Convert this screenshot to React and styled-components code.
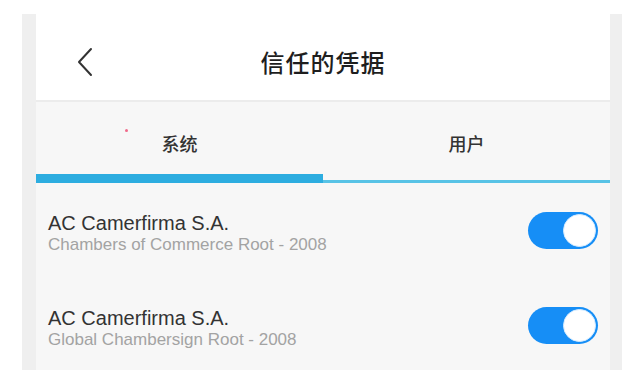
import React from "react";
import styled, { createGlobalStyle } from "styled-components";

const GlobalStyle = createGlobalStyle`
  html, body { margin: 0; padding: 0; background: #ffffff; }
  body { font-family: "Liberation Sans", "Noto Sans CJK SC", sans-serif; }
`;

const Frame = styled.div`
  margin: 14px 12px 0 22px;
  width: 574px;
  height: 356px;
  padding: 0 12px 0 14px;
  background: #efefef;
`;

const Screen = styled.div`
  height: 100%;
  background: #f7f7f7;
  display: flex;
  flex-direction: column;
  overflow: hidden;
`;

const Header = styled.header`
  height: 88px;
  flex: none;
  box-sizing: border-box;
  padding-top: 9px;
  background: #ffffff;
  border-bottom: 2px solid #ececec;
  display: grid;
  grid-template-columns: 1fr auto 1fr;
  align-items: center;
`;

const BackButton = styled.button`
  justify-self: start;
  margin-left: 40px;
  padding: 0;
  border: 0;
  background: none;
  display: flex;
`;

const Title = styled.h1`
  margin: 0;
  font-family: "Noto Sans CJK SC", sans-serif;
  font-size: 24px;
  font-weight: 500;
  color: #1e1e1e;
  letter-spacing: 1px;
`;

const Tabs = styled.nav`
  position: relative;
  flex: none;
  height: 81px;
  display: flex;
`;

const Tab = styled.div`
  flex: 1;
  box-sizing: border-box;
  padding-top: 10px;
  display: grid;
  grid-template-rows: 1fr 9px;
`;

const TabLabel = styled.span`
  align-self: center;
  justify-self: center;
  font-family: "Noto Sans CJK SC", sans-serif;
  font-size: 18px;
  font-weight: 500;
  color: #333333;
`;

const Indicator = styled.span`
  align-self: end;
  height: ${(p) => (p.$active ? "9px" : "3px")};
  background: ${(p) => (p.$active ? "#2dade0" : "#58c3e6")};
`;

const Speck = styled.span`
  position: absolute;
  left: 89px;
  top: 27px;
  width: 3px;
  height: 3px;
  border-radius: 50%;
  background: #f06a8a;
`;

const List = styled.ul`
  margin: 0;
  padding: 0;
  list-style: none;
`;

const Row = styled.li`
  height: 95px;
  box-sizing: border-box;
  padding: 0 12px;
  display: flex;
  align-items: center;
  justify-content: space-between;
`;

const Texts = styled.div`
  display: flex;
  flex-direction: column;
  padding-top: 4px;
`;

const ItemTitle = styled.span`
  font-size: 20px;
  line-height: 24px;
  color: #333333;
`;

const ItemSub = styled.span`
  font-size: 17px;
  line-height: 20px;
  color: #a3a3a3;
`;

const Toggle = styled.span`
  width: 70px;
  height: 37px;
  box-sizing: border-box;
  border-radius: 19px;
  background: ${(p) => (p.$on ? "#168ef6" : "#d8d8d8")};
  padding: 2px 2px;
  display: flex;
  justify-content: ${(p) => (p.$on ? "flex-end" : "flex-start")};
  align-items: center;
`;

const Knob = styled.span`
  width: 33px;
  height: 33px;
  box-sizing: border-box;
  border-radius: 50%;
  background: #ffffff;
  border: 1px solid #d6ecff;
`;

const items = [
  { title: "AC Camerfirma S.A.", sub: "Chambers of Commerce Root - 2008" },
  { title: "AC Camerfirma S.A.", sub: "Global Chambersign Root - 2008" },
];

export default function App() {
  return (
    <>
      <GlobalStyle />
      <Frame>
        <Screen>
          <Header>
            <BackButton aria-label="back">
              <svg width="18" height="30" viewBox="0 0 18 30" fill="none">
                <path d="M15 2 L3 15 L15 28" stroke="#333" strokeWidth="2" strokeLinecap="round" strokeLinejoin="round" />
              </svg>
            </BackButton>
            <Title>信任的凭据</Title>
            <span />
          </Header>
          <Tabs>
            <Speck />
            <Tab>
              <TabLabel>系统</TabLabel>
              <Indicator $active />
            </Tab>
            <Tab>
              <TabLabel>用户</TabLabel>
              <Indicator />
            </Tab>
          </Tabs>
          <List>
            {items.map((it, i) => (
              <Row key={i}>
                <Texts>
                  <ItemTitle>{it.title}</ItemTitle>
                  <ItemSub>{it.sub}</ItemSub>
                </Texts>
                <Toggle $on>
                  <Knob />
                </Toggle>
              </Row>
            ))}
          </List>
        </Screen>
      </Frame>
    </>
  );
}
